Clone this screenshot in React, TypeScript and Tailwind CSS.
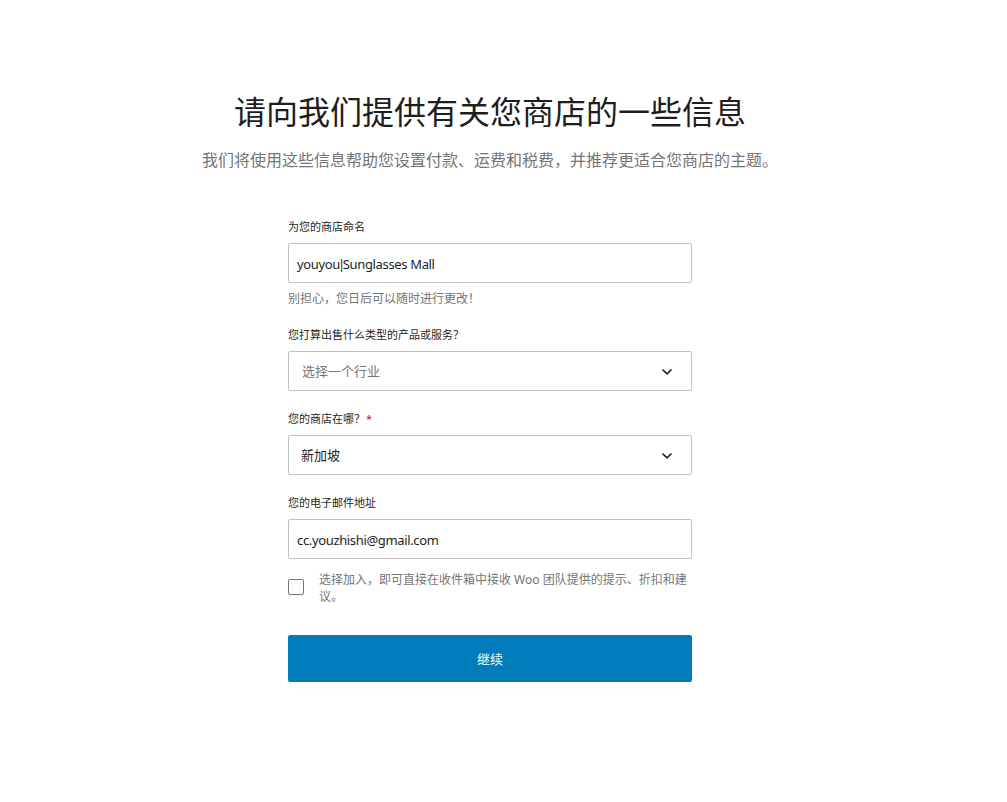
import React from "react";

const font = { fontFamily: '"Noto Sans", "Noto Sans CJK SC", sans-serif' };

function Chevron() {
  return (
    <svg width="12" height="8" viewBox="0 0 12 8" fill="none">
      <path d="M1.5 1.5 L6 5.8 L10.5 1.5" stroke="#1e1e1e" strokeWidth="1.6" fill="none" />
    </svg>
  );
}

export default function App() {
  return (
    <div className="min-h-[802px] w-full bg-white" style={font}>
      <div className="w-[980px] flex flex-col items-center pt-[92px]">
        <h1 className="text-[32px] leading-[40px] text-[#1e1e1e] font-normal">请向我们提供有关您商店的一些信息</h1>
        <p className="mt-[16px] text-[16px] leading-[24px] text-[#757575]">
          我们将使用这些信息帮助您设置付款、运费和税费，并推荐更适合您商店的主题。
        </p>

        <div className="w-[404px] flex flex-col mt-[47px]">
          <label className="text-[11px] leading-[16px] text-[#1e1e1e]">为您的商店命名</label>
          <div className="mt-[8px] h-[40px] border border-[#c3c3c3] rounded-[2px] flex items-center pl-[8px] pt-[3px] text-[13px] tracking-[-0.35px] text-[#1e1e1e]">
            youyou<span className="ml-[-2px] mr-[-2px]">|</span>Sunglasses Mall
          </div>
          <p className="mt-[8px] text-[12px] leading-[16px] text-[#757575]">别担心，您日后可以随时进行更改！</p>

          <label className="mt-[20px] text-[11px] leading-[16px] text-[#1e1e1e]">您打算出售什么类型的产品或服务？</label>
          <div className="mt-[8px] h-[40px] border border-[#c3c3c3] rounded-[2px] flex items-center justify-between pl-[13px] pr-[18px] pt-[1px] text-[13px] text-[#757575]">
            <span>选择一个行业</span>
            <Chevron />
          </div>

          <label className="mt-[20px] text-[11px] leading-[16px] text-[#1e1e1e]">
            您的商店在哪？<span className="ml-[1px] text-[#cc1818]">*</span>
          </label>
          <div className="mt-[8px] h-[40px] border border-[#c3c3c3] rounded-[2px] flex items-center justify-between pl-[12px] pr-[18px] pt-[1px] text-[13px] text-[#1e1e1e]">
            <span>新加坡</span>
            <Chevron />
          </div>

          <label className="mt-[20px] text-[11px] leading-[16px] text-[#1e1e1e]">您的电子邮件地址</label>
          <div className="mt-[8px] h-[40px] border border-[#c3c3c3] rounded-[2px] flex items-center pl-[8px] pt-[3px] text-[13px] tracking-[-0.35px] text-[#1e1e1e]">
            cc.youzhishi@gmail.com
          </div>

          <div className="mt-[12px] flex items-start">
            <div className="mt-[8px] w-[16px] h-[16px] shrink-0 border border-[#757575] rounded-[2px] bg-white" />
            <p className="ml-[15px] text-[12px] leading-[17px] text-[#757575]">
              选择加入，即可直接在收件箱中接收 Woo 团队提供的提示、折扣和建议。
            </p>
          </div>

          <button className="mt-[30px] h-[47px] w-full bg-[#007cba] rounded-[2px] pt-[3px] text-white text-[13px]">继续</button>
        </div>
      </div>
    </div>
  );
}
